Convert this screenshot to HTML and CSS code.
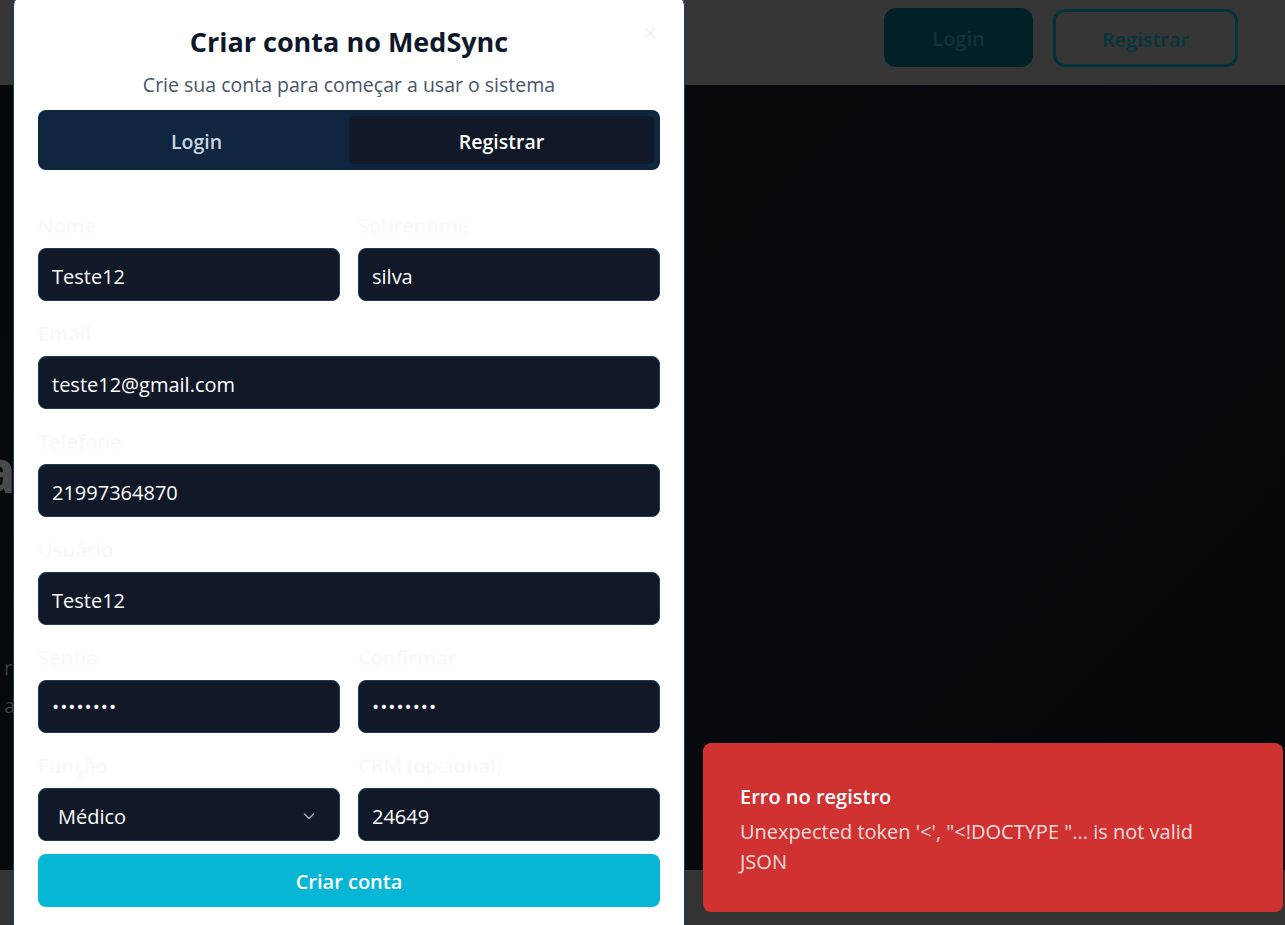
FILE: index.html
```html
<!DOCTYPE html>
<html lang="pt-BR">
<head>
<meta charset="utf-8">
<title>MedSync</title>
<link rel="stylesheet" href="styles.css">
</head>
<body>
<div class="page">
  <header class="topbar">
    <div class="topbar-actions">
      <button class="hdr-btn hdr-btn-solid">Login</button>
      <button class="hdr-btn hdr-btn-outline">Registrar</button>
    </div>
  </header>
  <main class="hero">
    <div class="hero-text">
      <h1 class="hero-title">a</h1>
      <p class="hero-sub">r<br>ac</p>
    </div>
  </main>
  <footer class="footer"></footer>
</div>

<div class="modal">
  <button class="modal-close" aria-label="Fechar">
    <svg width="16" height="16" viewBox="0 0 16 16"><path d="M3 3L13 13M13 3L3 13" stroke="currentColor" stroke-width="1.5" stroke-linecap="round"/></svg>
  </button>
  <h2 class="modal-title">Criar conta no MedSync</h2>
  <p class="modal-sub">Crie sua conta para começar a usar o sistema</p>
  <div class="tabs">
    <div class="tab">Login</div>
    <div class="tab tab-active">Registrar</div>
  </div>
  <form class="form">
    <div class="row two">
      <div class="field"><label>Nome</label><div class="input">Teste12</div></div>
      <div class="field"><label>Sobrenome</label><div class="input">silva</div></div>
    </div>
    <div class="field"><label>Email</label><div class="input">teste12@gmail.com</div></div>
    <div class="field"><label>Telefone</label><div class="input">21997364870</div></div>
    <div class="field"><label>Usuário</label><div class="input">Teste12</div></div>
    <div class="row two">
      <div class="field"><label>Senha</label><div class="input dots">••••••••</div></div>
      <div class="field"><label>Confirmar</label><div class="input dots">••••••••</div></div>
    </div>
    <div class="row two">
      <div class="field"><label>Função</label>
        <div class="input select"><span>Médico</span>
          <svg width="16" height="16" viewBox="0 0 16 16"><path d="M3.5 6L8 10.5L12.5 6" fill="none" stroke="currentColor" stroke-width="1.5" stroke-linecap="round" stroke-linejoin="round"/></svg>
        </div>
      </div>
      <div class="field"><label>CRM (opcional)</label><div class="input">24649</div></div>
    </div>
    <button type="button" class="submit">Criar conta</button>
  </form>
</div>

<div class="toast">
  <div class="toast-title">Erro no registro</div>
  <div class="toast-msg">Unexpected token '&lt;', "&lt;!DOCTYPE "... is not valid JSON</div>
</div>
</body>
</html>
```

FILE: styles.css
```css
* { box-sizing: border-box; }
html, body { margin: 0; padding: 0; }
body {
  font-family: "Open Sans", "Noto Sans", Arial, sans-serif;
  background: #333333;
  overflow: hidden;
  height: 925px;
}
.page {
  display: flex;
  flex-direction: column;
  height: 925px;
}
.topbar {
  height: 85px;
  background: #363636;
  display: flex;
  justify-content: flex-end;
  align-items: flex-start;
  padding: 8px 47px 0 0;
  flex-shrink: 0;
}
.topbar-actions { display: flex; gap: 20px; align-items: flex-start; }
.hdr-btn {
  font-family: inherit;
  font-size: 20px;
  font-weight: 600;
  height: 59px;
  border-radius: 12px;
  cursor: pointer;
  padding-top: 3px;
}
.hdr-btn-solid {
  width: 149px;
  background: #022126;
  border: none;
  color: #14303a;
}
.hdr-btn-outline {
  width: 185px;
  height: 58px;
  margin-top: 1px;
  background: transparent;
  border: 3px solid #04323a;
  color: #05363e;
}
.hero {
  height: 785px;
  background: linear-gradient(135deg, #05070a 0%, #080a0f 55%, #04060a 100%);
  overflow: hidden;
  flex-shrink: 0;
}
.hero-text { margin-left: -20px; padding-top: 345px; }
.hero-title {
  margin: 0;
  font-size: 60px;
  font-weight: 700;
  color: #4a4a4a;
  line-height: 80px;
}
.hero-sub {
  margin: 139px 0 0 24px;
  font-size: 20px;
  line-height: 38px;
  color: #3c3c3c;
}
.footer { flex: 1; background: #333333; }

.modal {
  position: fixed;
  left: 13px;
  top: -6px;
  width: 672px;
  height: 960px;
  background: #ffffff;
  border: 1px solid #1e3a5f;
  border-radius: 12px;
  padding: 30px 24px 24px;
}
.modal-close {
  position: absolute;
  top: 30px;
  right: 26px;
  background: none;
  border: none;
  padding: 0;
  color: #eef2f2;
  width: 16px;
  height: 16px;
}
.modal-title {
  margin: 0;
  text-align: center;
  font-size: 27px;
  line-height: 34px;
  font-weight: 700;
  color: #0f172a;
}
.modal-sub {
  margin: 12px 0 0;
  text-align: center;
  font-size: 19.5px;
  line-height: 28px;
  color: #475569;
}
.tabs {
  margin-top: 11px;
  height: 60px;
  background: #102540;
  border-radius: 8px;
  padding: 6px;
  display: grid;
  grid-template-columns: 1fr 1fr;
}
.tab {
  display: flex;
  align-items: center;
  justify-content: center;
  font-size: 19.5px;
  font-weight: 600;
  color: #cbd5e1;
  border-radius: 5px;
  padding-top: 2px;
}
.tab-active { background: #111827; color: #ffffff; }

.form {
  margin-top: 44px;
  display: flex;
  flex-direction: column;
  gap: 21px;
}
.row.two {
  display: grid;
  grid-template-columns: 1fr 1fr;
  gap: 18px;
}
.field { display: flex; flex-direction: column; }
.field label {
  font-size: 20px;
  line-height: 24px;
  font-weight: 600;
  color: #f8f9fb;
  margin-bottom: 10px;
}
.input {
  height: 53px;
  background: #111827;
  border: 1px solid #1e3a5f;
  border-radius: 8px;
  padding: 3px 13px 0;
  display: flex;
  align-items: center;
  font-size: 20px;
  color: #ffffff;
}
.input.dots { font-size: 19px; letter-spacing: 1px; padding-top: 1px; }
.input.select {
  padding: 3px 22px 0 19px;
  justify-content: space-between;
}
.input.select svg { color: #9ca3af; }
.submit {
  margin-top: -8px;
  height: 53px;
  border: none;
  border-radius: 8px;
  background: #06b6d4;
  color: #ffffff;
  font-family: inherit;
  font-size: 20px;
  font-weight: 600;
  padding-top: 3px;
}

.toast {
  position: fixed;
  left: 703px;
  top: 743px;
  width: 580px;
  height: 169px;
  background: #d03131;
  border-radius: 8px;
  padding: 42px 37px 35px;
  color: #ffffff;
}
.toast-title {
  font-size: 20px;
  line-height: 24px;
  font-weight: 600;
}
.toast-msg {
  margin-top: 8px;
  font-size: 20px;
  line-height: 30px;
  color: #f7dede;
  max-width: 470px;
}
```
